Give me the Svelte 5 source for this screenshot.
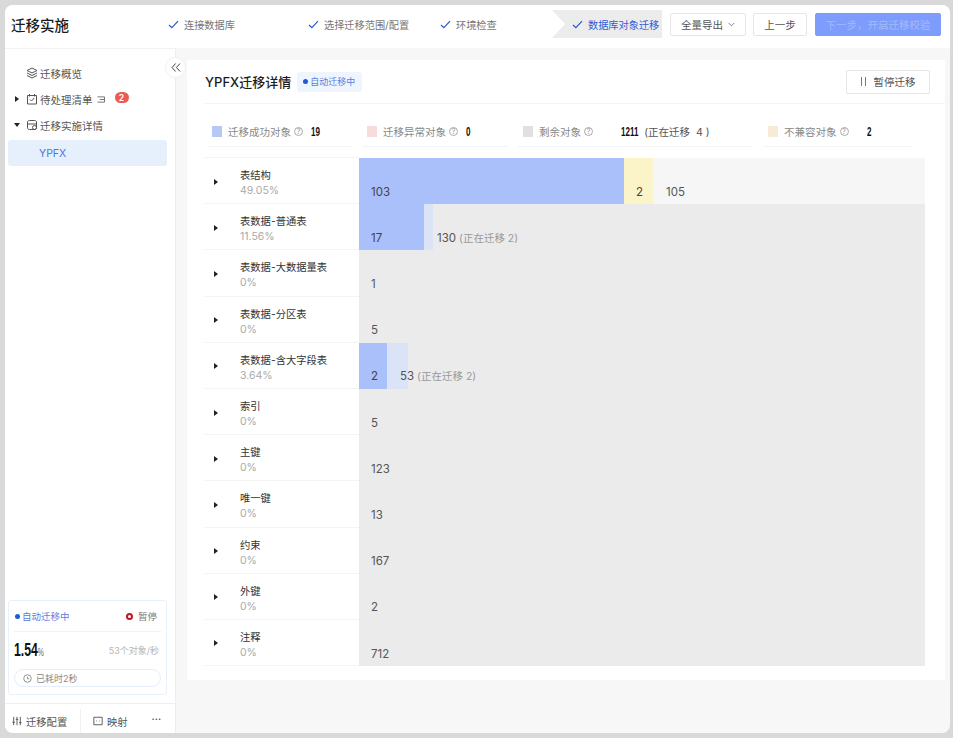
<script>
  const steps = [
    { label: '连接数据库', width: 140 },
    { label: '选择迁移范围/配置', width: 132 },
    { label: '环境检查', width: 112 }
  ];

  const legend = [
    { label: '迁移成功对象', value: '19', color: '#b6c9f5', width: 145 },
    { label: '迁移异常对象', value: '0', color: '#f6dcdb', width: 146 },
    { label: '剩余对象', value: '1211', color: '#e0e0e0', width: 235, extra: '(正在迁移  4 )', gap: 28 },
    { label: '不兼容对象', value: '2', color: '#f6ebd9', width: 148, gap: 18 }
  ];

  const rows = [
    { name: '表结构', pct: '49.05%', done: 265, doneText: '103', warn: 29, warnText: '2', light: 0, rest: '105', pale: true },
    { name: '表数据-普通表', pct: '11.56%', done: 65, doneText: '17', light: 9, rest: '130', note: '(正在迁移 2)' },
    { name: '表数据-大数据量表', pct: '0%', rest: '1' },
    { name: '表数据-分区表', pct: '0%', rest: '5' },
    { name: '表数据-含大字段表', pct: '3.64%', done: 28, doneText: '2', light: 21, rest: '53', note: '(正在迁移 2)' },
    { name: '索引', pct: '0%', rest: '5' },
    { name: '主键', pct: '0%', rest: '123' },
    { name: '唯一键', pct: '0%', rest: '13' },
    { name: '约束', pct: '0%', rest: '167' },
    { name: '外键', pct: '0%', rest: '2' },
    { name: '注释', pct: '0%', rest: '712' }
  ];
</script>

<div class="frame">
  <header class="topbar">
    <h1>迁移实施</h1>
    <ol class="steps">
      {#each steps as step}
        <li style="width: {step.width}px">
          <svg class="check" viewBox="0 0 12 10"><path d="M1 5.500 4.200 8.500 11 1.200" /></svg>
          {step.label}
        </li>
      {/each}
      <li class="current">
        <svg class="check" viewBox="0 0 12 10"><path d="M1 5.500 4.200 8.500 11 1.200" /></svg>
        数据库对象迁移
      </li>
    </ol>
    <div class="actions">
      <button class="btn export">全量导出
        <svg viewBox="0 0 8 5"><path d="M.7.7 4 4 7.300.7" /></svg>
      </button>
      <button class="btn prev">上一步</button>
      <button class="btn next">下一步，开启迁移校验</button>
    </div>
  </header>

  <div class="body">
    <aside class="sidebar">
      <button class="collapse" aria-label="收起">
        <svg viewBox="0 0 10 10"><path d="M4.600 1 1 5l3.600 4M9 1 5.400 5 9 9" /></svg>
      </button>
      <nav>
        <div class="nav-item">
          <span class="caret-slot"></span>
          <svg class="nav-icon" viewBox="0 0 12 12"><path d="M6 1 11 3.500 6 6 1 3.500zM1 6l5 2.500L11 6M1 8.500 6 11l5-2.500" /></svg>
          迁移概览
        </div>
        <div class="nav-item">
          <span class="caret-slot"><i class="tri"></i></span>
          <svg class="nav-icon" viewBox="0 0 12 12"><path d="M1.500 2.500h9v8.500h-9zM3.500 1v2.500M8.500 1v2.500M4 6.500l1.500 1.500L8.200 5" /></svg>
          待处理清单
          <svg class="list-icon" viewBox="0 0 9 8"><path d="M.5 1h8M3 4h5.500M.5 7h8M8.500 1v6" /></svg>
          <span class="count">2</span>
        </div>
        <div class="nav-item">
          <span class="caret-slot"><i class="tri down"></i></span>
          <svg class="nav-icon" viewBox="0 0 12 12"><path d="M1.500 3c0-1 1-1.500 2-1.500h5c1 0 2 .5 2 1.500v6c0 1-1 1.500-2 1.500h-5c-1 0-2-.5-2-1.500zM1.500 5h9" /><circle cx="8.500" cy="8.500" r="2" /></svg>
          迁移实施详情
        </div>
        <div class="nav-sub">YPFX</div>
      </nav>

      <section class="progress">
        <div class="progress-head">
          <span class="live"><i></i>自动迁移中</span>
          <span class="pause-link"><i></i>暂停</span>
        </div>
        <div class="progress-stats">
          <span class="big">1.54<small>%</small></span>
          <span class="rate">53个对象/秒</span>
        </div>
        <div class="elapsed">
          <svg viewBox="0 0 10 10"><circle cx="5" cy="5" r="4.200" /><path d="M5 2.800V5.300H7" /></svg>
          已耗时2秒
        </div>
      </section>

      <footer class="side-foot">
        <span class="foot-a">
          <svg viewBox="0 0 12 12"><path d="M2 1v10M6 1v10M10 1v10M.5 7.500h3M4.500 4h3M8.500 8h3" /></svg>
          迁移配置
        </span>
        <span class="foot-b">
          <svg viewBox="0 0 12 12"><path d="M1 1.500h10v9H1zM4 6h.8M7.200 6H8" /></svg>
          映射
        </span>
        <span class="more">···</span>
      </footer>
    </aside>

    <main class="content">
      <section class="card">
        <div class="card-head">
          <h2>YPFX迁移详情</h2>
          <span class="badge"><i></i>自动迁移中</span>
          <button class="btn pause"><i></i>暂停迁移</button>
        </div>

        <div class="legend">
          {#each legend as item}
            <div class="legend-item" style="width: {item.width}px">
              <i class="swatch" style="background: {item.color}"></i>
              <span class="legend-label">{item.label}</span>
              <span class="help">?</span>
              <b class="num" style="margin-left: {item.gap ?? 8}px">{item.value}</b>
              {#if item.extra}<span class="legend-extra">{item.extra}</span>{/if}
            </div>
          {/each}
        </div>

        <div class="chart">
          {#each rows as row}
            <div class="row">
              <div class="row-label">
                <i class="tri"></i>
                <div>
                  <div class="row-name">{row.name}</div>
                  <div class="row-pct">{row.pct}</div>
                </div>
              </div>
              <div class="track" class:pale={row.pale}>
                {#if row.done}
                  <div class="seg done" style="width: {row.done}px">{row.doneText}</div>
                {/if}
                {#if row.warn}
                  <div class="seg warn" style="width: {row.warn}px">{row.warnText}</div>
                {/if}
                <div class="seg rest">
                  {#if row.light}<i class="moving" style="width: {row.light}px"></i>{/if}
                  <span class="rest-text" class:after={row.done}>{row.rest}{#if row.note}<em>{row.note}</em>{/if}</span>
                </div>
              </div>
            </div>
          {/each}
        </div>
      </section>
    </main>
  </div>
</div>

<style>
  :global(body) {
    background: #d9d9d9;
  }

  :global(html, body) {
    height: 100%;
    overflow: hidden;
  }

  .frame {
    position: relative;
    display: flex;
    flex-direction: column;
    box-sizing: border-box;
    width: 945px;
    height: 728px;
    margin: 5px 0 0 5px;
    background: #f7f7f7;
    border-radius: 8px;
    overflow: hidden;
    font-family: Inter, "Noto Sans CJK SC", sans-serif;
    font-size: 10.500px;
    color: #444;
  }

  i {
    display: block;
    font-style: normal;
  }

  svg {
    display: block;
    fill: none;
    stroke: currentColor;
    stroke-width: 1;
    flex: none;
  }

  button {
    font-family: inherit;
  }

  .topbar {
    display: flex;
    align-items: center;
    box-sizing: border-box;
    height: 43px;
    padding-bottom: 5px;
    flex: none;
    background: #fff;
  }

  h1 {
    width: 163px;
    flex: none;
    box-sizing: border-box;
    margin: 0;
    padding-left: 6px;
    font-size: 14.500px;
    font-weight: 500;
    color: #1b1b1b;
    white-space: nowrap;
  }

  .steps {
    display: flex;
    align-items: center;
    width: 494px;
    flex: none;
    height: 28px;
    margin: 0;
    padding: 0;
    list-style: none;
    font-size: 10.200px;
    color: #777;
  }

  .steps li {
    display: flex;
    align-items: center;
    gap: 5px;
    flex: none;
    white-space: nowrap;
  }

  .check {
    width: 11px;
    height: 9px;
    stroke-width: 1.300;
    color: #2858d0;
  }

  .steps .current {
    flex: 1;
    align-self: stretch;
    box-sizing: border-box;
    padding-left: 20px;
    background: #ececec;
    color: #2f5fd6;
    clip-path: polygon(0 0, 100% 0, 100% 100%, 0 100%, 13px 50%);
  }

  .actions {
    display: flex;
    align-items: center;
    gap: 7px;
    margin-left: 8px;
  }

  .btn {
    display: flex;
    align-items: center;
    justify-content: center;
    height: 23px;
    padding: 0;
    background: #fff;
    border: 1px solid #e6e6e6;
    border-radius: 2px;
    font-size: 10.500px;
    color: #555;
    white-space: nowrap;
  }

  .export {
    width: 76px;
    gap: 5px;
  }

  .export svg {
    width: 7px;
    height: 5px;
    color: #777;
  }

  .prev {
    width: 54px;
  }

  .next {
    width: 126px;
    margin-left: 1px;
    background: #7d9cfb;
    border-color: #7d9cfb;
    color: #a3baf9;
  }

  .body {
    display: flex;
    flex: 1;
    min-height: 0;
    border-top: 0;
  }

  .sidebar {
    position: relative;
    display: flex;
    flex-direction: column;
    box-sizing: border-box;
    width: 171px;
    flex: none;
    background: #fff;
    border-top: 1px solid #f2f2f2;
    border-right: 1px solid #ededed;
  }

  .collapse {
    position: absolute;
    top: 8px;
    right: -11px;
    z-index: 1;
    display: flex;
    align-items: center;
    justify-content: center;
    width: 21px;
    height: 21px;
    padding: 0;
    background: #fff;
    border: 1px solid #f0f0f0;
    border-radius: 50%;
    color: #444;
  }

  .collapse svg {
    width: 10px;
    height: 11px;
  }

  nav {
    flex: 1;
    padding: 11px 8px 0 3px;
  }

  .nav-item {
    display: flex;
    align-items: center;
    height: 26px;
    font-size: 10.500px;
    color: #555;
    white-space: nowrap;
  }

  .caret-slot {
    display: flex;
    align-items: center;
    justify-content: center;
    width: 18px;
    flex: none;
  }

  .tri {
    width: 0;
    height: 0;
    border-top: 3px solid transparent;
    border-bottom: 3px solid transparent;
    border-left: 4px solid #222;
  }

  .tri.down {
    border-left: 3px solid transparent;
    border-right: 3px solid transparent;
    border-top: 4px solid #222;
    border-bottom: 0;
  }

  .nav-icon {
    width: 12px;
    height: 12px;
    margin-right: 2px;
    color: #555;
  }

  .list-icon {
    width: 8px;
    height: 7px;
    margin-left: 4px;
    color: #666;
  }

  .count {
    display: flex;
    align-items: center;
    justify-content: center;
    width: 14px;
    height: 11px;
    margin: -3px 0 0 10px;
    background: #ef5a50;
    border-radius: 6px;
    font-size: 8.500px;
    font-weight: 600;
    color: #fff;
  }

  .nav-sub {
    height: 26px;
    margin: 2px 0 0 0;
    padding-left: 31px;
    background: #e6effc;
    border-radius: 3px;
    font-size: 10.500px;
    line-height: 27px;
    color: #4f74e3;
  }

  .progress {
    box-sizing: border-box;
    height: 95px;
    margin: 0 8px 8px 3px;
    padding: 0 5px;
    border: 1px solid #e8f0fc;
    border-radius: 3px;
    flex: none;
  }

  .progress-head {
    display: flex;
    align-items: center;
    justify-content: space-between;
    height: 30px;
    padding: 0 4px 0 1px;
    border-bottom: 1px solid #edf2fb;
    font-size: 9.500px;
  }

  .live {
    display: flex;
    align-items: center;
    gap: 2px;
    color: #5a80e0;
  }

  .live i {
    width: 5px;
    height: 5px;
    background: #1f5ad8;
    border-radius: 50%;
  }

  .pause-link {
    display: flex;
    align-items: center;
    gap: 5px;
    color: #777;
  }

  .pause-link i {
    box-sizing: border-box;
    width: 7px;
    height: 7px;
    border: 2px solid #c4161c;
    border-radius: 50%;
  }

  .progress-stats {
    display: flex;
    align-items: center;
    justify-content: space-between;
    height: 37px;
    padding: 0 2px 0 0;
  }

  .big {
    display: inline-block;
    font-family: "Liberation Sans", sans-serif;
    font-size: 18px;
    font-weight: 700;
    color: #111;
    transform: scaleX(0.68);
    transform-origin: left center;
  }

  .big small {
    font-size: 10px;
    font-weight: 400;
    color: #666;
  }

  .rate {
    font-size: 9px;
    color: #b5b5b5;
  }

  .elapsed {
    display: flex;
    align-items: center;
    gap: 4px;
    box-sizing: border-box;
    height: 18px;
    padding-left: 8px;
    border: 1px solid #e6eefa;
    border-radius: 9px;
    font-size: 9px;
    color: #888;
  }

  .elapsed svg {
    width: 9px;
    height: 9px;
    color: #888;
  }

  .side-foot {
    display: flex;
    align-items: center;
    box-sizing: border-box;
    height: 30px;
    padding-top: 5px;
    flex: none;
    border-top: 1px solid #efefef;
    font-size: 10.300px;
    color: #555;
    white-space: nowrap;
  }

  .side-foot span {
    display: flex;
    align-items: center;
    gap: 4px;
  }

  .side-foot svg {
    width: 10px;
    height: 10px;
    color: #444;
  }

  .foot-a {
    box-sizing: border-box;
    width: 76px;
    height: 100%;
    padding-left: 7px;
    border-right: 1px solid #f0f0f0;
  }

  .foot-b {
    margin-left: 12px;
  }

  .more {
    margin-left: 24px;
    margin-top: -5px;
    font-size: 11px;
    font-weight: 400;
    color: #444;
  }

  .content {
    flex: 1;
    min-width: 0;
    padding: 12px 5px 0 11px;
  }

  .card {
    box-sizing: border-box;
    height: 620px;
    padding: 0 20px 0 18px;
    background: #fff;
  }

  .card-head {
    display: flex;
    align-items: center;
    height: 43px;
    margin: 0 -20px 0 0;
    padding-right: 15px;
    border-bottom: 1px solid #f3f3f3;
  }

  h2 {
    margin: 0;
    font-size: 13px;
    font-weight: 500;
    color: #1c1c1c;
    white-space: nowrap;
  }

  .badge {
    display: flex;
    align-items: center;
    gap: 2px;
    height: 20px;
    margin-left: 6px;
    padding: 0 7px 0 6px;
    background: #eff5fe;
    border-radius: 3px;
    font-size: 9px;
    color: #5a80e0;
  }

  .badge i {
    width: 5px;
    height: 5px;
    background: #1f5ad8;
    border-radius: 50%;
  }

  .pause {
    gap: 8px;
    width: 84px;
    height: 24px;
    margin-left: auto;
  }

  .pause i {
    box-sizing: border-box;
    width: 5px;
    height: 9px;
    border-left: 1px solid #e8484f;
    border-right: 1px solid #e8484f;
  }

  .legend {
    display: flex;
    gap: 10px;
    margin: 14px 0 11px 2px;
  }

  .legend-item {
    display: flex;
    align-items: center;
    box-sizing: border-box;
    height: 29px;
    padding: 0 0 2px 5px;
    flex: none;
    border-bottom: 1px solid #f3f3f3;
    white-space: nowrap;
  }

  .swatch {
    width: 10px;
    height: 11px;
    margin-right: 6px;
    flex: none;
  }

  .legend-label {
    color: #888;
  }

  .help {
    display: flex;
    align-items: center;
    justify-content: center;
    box-sizing: border-box;
    width: 9px;
    height: 9px;
    margin-left: 3px;
    border: 1px solid #aaa;
    border-radius: 50%;
    font-size: 7px;
    color: #999;
  }

  .num {
    display: inline-block;
    font-family: "Liberation Sans", sans-serif;
    font-size: 13px;
    font-weight: 700;
    color: #111;
    transform: scaleX(0.62);
    transform-origin: left center;
  }

  .legend-extra {
    margin-left: -5px;
    color: #555;
    white-space: pre;
  }

  .chart {
    display: flex;
    flex-direction: column;
    height: 508px;
  }

  .row {
    display: flex;
    flex: 1;
    min-height: 0;
  }

  .row:first-child .row-label {
    box-shadow: 0 -1px #f3f3f3;
  }

  .row-label {
    display: flex;
    align-items: center;
    box-sizing: border-box;
    width: 154px;
    padding: 5px 0 0 9px;
    flex: none;
    border-bottom: 1px solid #f3f3f3;
  }

  .row-label .tri {
    margin: -3px 22px 0 0;
  }

  .row-name {
    font-size: 10.300px;
    line-height: 16px;
    color: #333;
    white-space: nowrap;
  }

  .row-pct {
    font-size: 10.500px;
    line-height: 16px;
    color: #aaa;
  }

  .track {
    display: flex;
    flex: 1;
    min-width: 0;
    background: #ebebeb;
  }

  .track.pale {
    background: #f6f6f6;
  }

  .seg {
    display: flex;
    align-items: flex-end;
    box-sizing: border-box;
    padding: 0 0 5.500px 12px;
    font-size: 11.500px;
    line-height: 13px;
    color: #444;
    flex: none;
  }

  .done {
    background: #aac0fb;
  }

  .warn {
    padding-left: 12px;
    background: #fcf4c9;
  }

  .rest {
    position: relative;
    flex: 1;
    padding-left: 0;
    color: #555;
  }

  .moving {
    position: absolute;
    inset: 0 auto 0 0;
    background: #dbe4f7;
  }

  .rest-text {
    position: relative;
    padding-left: 12px;
    white-space: nowrap;
  }

  .rest-text.after {
    padding-left: 13px;
  }

  .rest-text em {
    margin-left: 3px;
    font-size: 10.500px;
    font-style: normal;
    color: #999;
  }
</style>
